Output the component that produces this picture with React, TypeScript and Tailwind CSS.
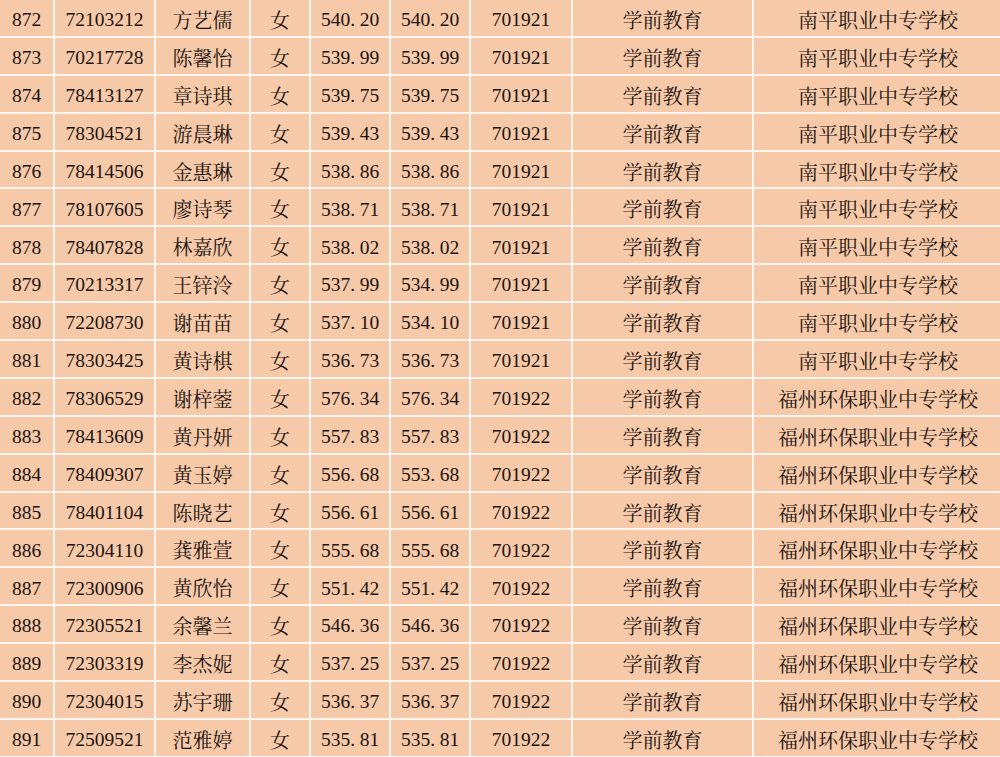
import React from "react";

const rows: [string, string, string, string, string, string, string][] = [
  ["872", "72103212", "方艺儒", "540.20", "540.20", "701921", "南平职业中专学校"],
  ["873", "70217728", "陈馨怡", "539.99", "539.99", "701921", "南平职业中专学校"],
  ["874", "78413127", "章诗琪", "539.75", "539.75", "701921", "南平职业中专学校"],
  ["875", "78304521", "游晨琳", "539.43", "539.43", "701921", "南平职业中专学校"],
  ["876", "78414506", "金惠琳", "538.86", "538.86", "701921", "南平职业中专学校"],
  ["877", "78107605", "廖诗琴", "538.71", "538.71", "701921", "南平职业中专学校"],
  ["878", "78407828", "林嘉欣", "538.02", "538.02", "701921", "南平职业中专学校"],
  ["879", "70213317", "王锌泠", "537.99", "534.99", "701921", "南平职业中专学校"],
  ["880", "72208730", "谢苗苗", "537.10", "534.10", "701921", "南平职业中专学校"],
  ["881", "78303425", "黄诗棋", "536.73", "536.73", "701921", "南平职业中专学校"],
  ["882", "78306529", "谢梓蓥", "576.34", "576.34", "701922", "福州环保职业中专学校"],
  ["883", "78413609", "黄丹妍", "557.83", "557.83", "701922", "福州环保职业中专学校"],
  ["884", "78409307", "黄玉婷", "556.68", "553.68", "701922", "福州环保职业中专学校"],
  ["885", "78401104", "陈晓艺", "556.61", "556.61", "701922", "福州环保职业中专学校"],
  ["886", "72304110", "龚雅萱", "555.68", "555.68", "701922", "福州环保职业中专学校"],
  ["887", "72300906", "黄欣怡", "551.42", "551.42", "701922", "福州环保职业中专学校"],
  ["888", "72305521", "余馨兰", "546.36", "546.36", "701922", "福州环保职业中专学校"],
  ["889", "72303319", "李杰妮", "537.25", "537.25", "701922", "福州环保职业中专学校"],
  ["890", "72304015", "苏宇珊", "536.37", "536.37", "701922", "福州环保职业中专学校"],
  ["891", "72509521", "范雅婷", "535.81", "535.81", "701922", "福州环保职业中专学校"],
];

const serif = "font-['Liberation_Serif','Noto_Serif_CJK_SC','Noto_Sans_CJK_SC',serif] text-[19.5px]";
const cjk = "font-['Noto_Serif_CJK_SC','Noto_Sans_CJK_SC',serif] text-[20px]";

function Score({ v }: { v: string }) {
  const [a, b] = v.split(".");
  return (
    <span className="inline-flex items-baseline">
      <span>{a}</span>
      <span className="inline-block w-[9.5px] text-left">.</span>
      <span>{b}</span>
    </span>
  );
}

const cell = "bg-[#f6c9a9] flex items-center justify-center pt-[4px] leading-none text-[#1c1410] whitespace-nowrap";

export default function App() {
  return (
    <div className="w-[1000px] h-[757px] overflow-hidden bg-[#fdf5ee]">
      <div className="w-[1004px] flex flex-col gap-[2px]">
        {rows.map((r) => (
          <div
            key={r[0]}
            className="grid grid-cols-[53px_99px_93px_58px_78px_78px_100px_179px_248px] gap-[2px] h-[35.9px]"
          >
            <div className={`${cell} ${serif}`}>{r[0]}</div>
            <div className={`${cell} ${serif}`}>{r[1]}</div>
            <div className={`${cell} ${cjk}`}>{r[2]}</div>
            <div className={`${cell} ${cjk}`}>女</div>
            <div className={`${cell} ${serif}`}>
              <Score v={r[3]} />
            </div>
            <div className={`${cell} ${serif}`}>
              <Score v={r[4]} />
            </div>
            <div className={`${cell} ${serif}`}>{r[5]}</div>
            <div className={`${cell} ${cjk}`}>学前教育</div>
            <div className={`${cell} ${cjk}`}>{r[6]}</div>
          </div>
        ))}
      </div>
    </div>
  );
}
